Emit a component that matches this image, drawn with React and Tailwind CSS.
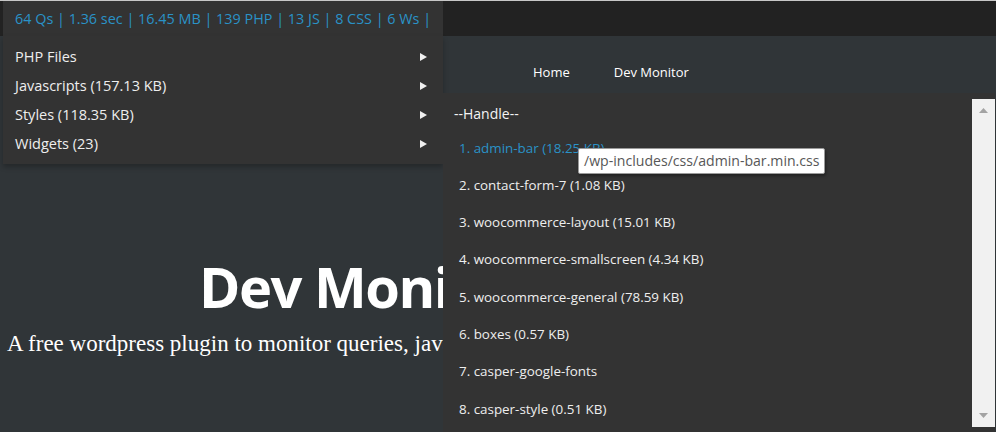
import React from "react";

const menuItems = ["PHP Files", "Javascripts (157.13 KB)", "Styles (118.35 KB)", "Widgets (23)"];

const styles = [
  "admin-bar (18.25 KB)",
  "contact-form-7 (1.08 KB)",
  "woocommerce-layout (15.01 KB)",
  "woocommerce-smallscreen (4.34 KB)",
  "woocommerce-general (78.59 KB)",
  "boxes (0.57 KB)",
  "casper-google-fonts",
  "casper-style (0.51 KB)",
];

function Arrow() {
  return (
    <svg width="7" height="8" viewBox="0 0 7 8" className="block">
      <path d="M0 0 L7 4 L0 8 Z" fill="#f0f0f0" />
    </svg>
  );
}

export default function App() {
  return (
    <div
      className="relative w-[996px] h-[432px] overflow-hidden bg-[#303538] text-white"
      style={{ fontFamily: '"Open Sans", "Noto Sans", sans-serif' }}
    >
      {/* admin bar */}
      <div className="h-[36px] bg-[#222] border-t border-[#c8c8c8] flex">
        <div className="relative ml-[3px] w-[440px] h-full bg-[#333]">
          <div className="h-full flex items-center pl-[12px] text-[14.4px] text-[#2a92c7] whitespace-nowrap">
            64 Qs | 1.36 sec | 16.45 MB | 139 PHP | 13 JS | 8 CSS | 6 Ws |
          </div>
          <div className="absolute left-0 top-full w-[440px] bg-[#333] py-[6px] shadow-[0_3px_5px_rgba(0,0,0,0.25)] z-10">
            {menuItems.map((m) => (
              <div key={m} className="h-[29px] flex items-center justify-between pl-[12px] pr-[16px] text-[14.5px] text-[#eee]">
                <span>{m}</span>
                <Arrow />
              </div>
            ))}
          </div>
        </div>
      </div>

      {/* site header */}
      <div className="h-[57px] flex items-start pt-[27px] pl-[533px] gap-[44px] text-[13px] leading-[18px] text-white">
        <span>Home</span>
        <span>Dev Monitor</span>
      </div>

      {/* hero, partly covered by the open submenu */}
      <div className="pt-[157px] w-[443px] overflow-hidden">
        <h1 className="pl-[199px] text-[56px] leading-[72px] font-bold tracking-[-1.5px] whitespace-nowrap">Dev Monitor</h1>
        <p
          className="pl-[7px] mt-[8px] text-[23px] leading-[28px] whitespace-nowrap"
          style={{ fontFamily: '"Liberation Serif", serif' }}
        >
          A free wordpress plugin to monitor queries, javascripts, styles and widgets
        </p>
      </div>

      {/* styles submenu */}
      <div className="absolute left-[443px] top-[93px] w-[552px] h-[339px] bg-[#333] pt-[6px] pb-[5px] flex z-10">
        <div className="flex-1 text-[13.4px]">
          <div className="pl-[11px] h-[28px] flex items-center text-[14px] text-[#f4f4f4]">--Handle--</div>
          <div className="mt-[2px]">
            {styles.map((s, i) => (
              <div
                key={s}
                className={`pl-[16px] h-[37.3px] flex items-center ${i === 0 ? "text-[#2a92c7]" : "text-[#eee]"}`}
              >
                {`${i + 1}. ${s}`}
              </div>
            ))}
          </div>
        </div>
        <div className="w-[23px] bg-[#f1f1f1] flex flex-col justify-between items-center py-[9px]">
          <svg width="9" height="5" viewBox="0 0 9 5">
            <path d="M4.5 0 L9 5 L0 5 Z" fill="#a3a3a3" />
          </svg>
          <svg width="9" height="5" viewBox="0 0 9 5">
            <path d="M0 0 L9 0 L4.5 5 Z" fill="#a3a3a3" />
          </svg>
        </div>
      </div>

      {/* tooltip */}
      <div className="absolute left-[578px] top-[148px] h-[26px] px-[5px] flex items-center bg-white border border-[#9a9a9a] rounded-[2px] shadow-[1px_2px_3px_rgba(0,0,0,0.35)] text-[14.1px] text-[#575757] whitespace-nowrap z-20">
        /wp-includes/css/admin-bar.min.css
      </div>
    </div>
  );
}
